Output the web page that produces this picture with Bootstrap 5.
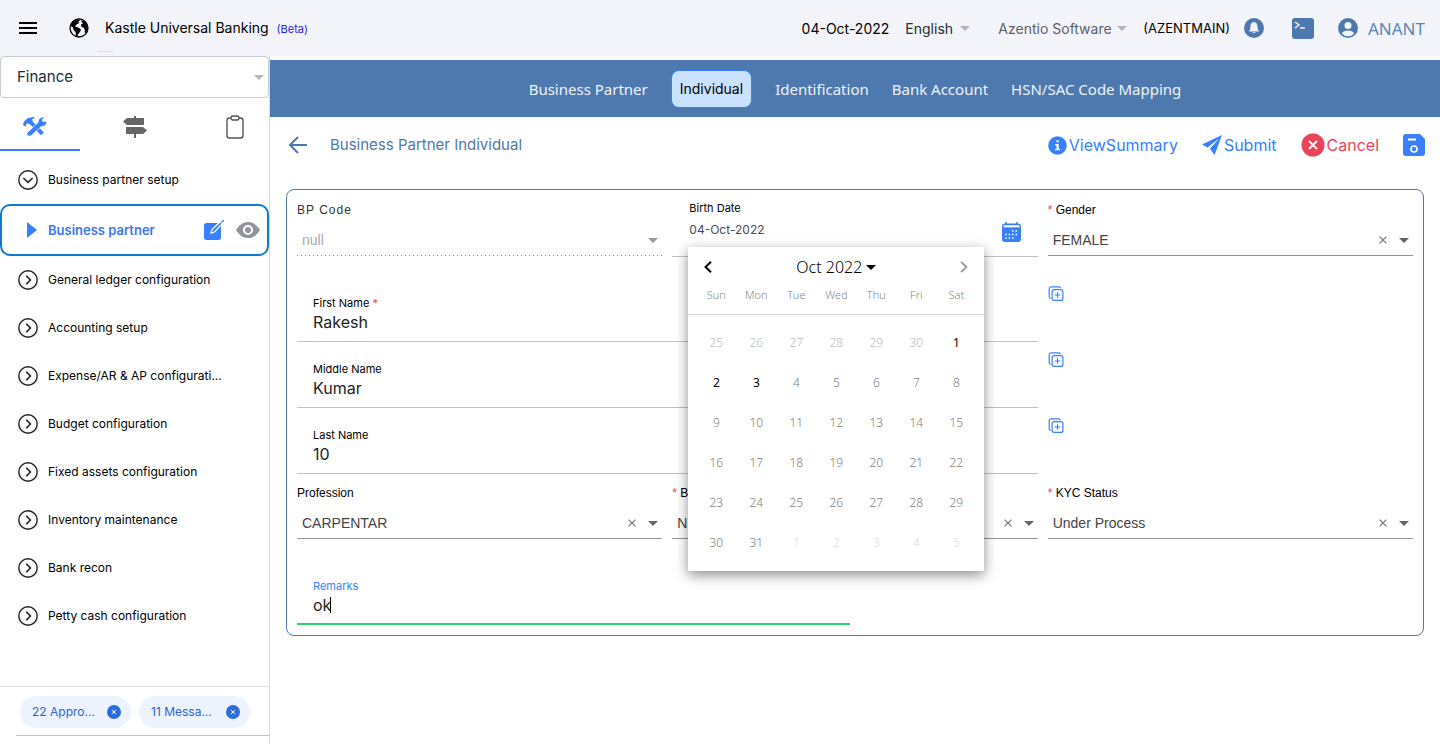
<!DOCTYPE html>
<html lang="en">
<head>
<meta charset="utf-8">
<meta name="viewport" content="width=device-width, initial-scale=1">
<title>Kastle Universal Banking</title>
<link href="https://cdn.jsdelivr.net/npm/bootstrap@5.3.0/dist/css/bootstrap.min.css" rel="stylesheet">
<style>
  :root { --steel: #4e79ae; --azure: #3880ff; --rule: #949494; }
  body { font-family: Inter, "Liberation Sans", sans-serif; font-size: 14px; color: #000; background: #fff; }
  a { text-decoration: none; color: inherit; }
  button { font-family: inherit; color: inherit; }
  svg { display: block; flex: none; }
  select { appearance: none; background: transparent; border: 0; padding: 0; outline: 0; color: inherit; font: inherit; }
  select:disabled { opacity: 1; }
  input { background: transparent; border: 0; padding: 0; outline: 0; color: inherit; }
  .plain { background: none; border: 0; padding: 0; }

  .topbar { height: 56px; background: #f3f4f9; padding: 0 15px 0 19px; }
  .dash { width: 16px; height: 1px; background: #dcdde2; left: 97px; top: 51px; }
  .globe { margin: 0 16px 0 32px; }
  .brand { line-height: 20px; }
  .beta { font-size: 11px; color: #2a1af0; }
  .code { font-size: 13px; line-height: 20px; }
  .bell { margin-left: 14px; }
  .user { font: 17px "Noto Sans", sans-serif; color: #5a84b8; gap: 10px; }
  .lang { width: 55px; color: #222b38; }
  .company { width: 119px; color: #5b6068; }

  .side { width: 270px; border-right: 1px solid #d9d9de; }
  .module { height: 42px; border: 1px solid #c9cbd6; border-radius: 4px; padding: 0 4px 0 16px; font-size: 15px; color: #222b38; }
  .tabs-row { height: 53px; margin-bottom: 5px; gap: 20px; }
  .tabs-row button { flex: 0 1 80px; border-bottom: 2px solid transparent; padding: 6px 0 0 23px; }
  .tabs-row button:not(:last-child) { flex-shrink: 0; }
  .tabs-row button.on { border-color: var(--azure); }
  .menu-row { height: 48px; padding-left: 18px; gap: 10px; font-size: 12px; line-height: 20px; }
  .menu-row.on { height: 52px; border: 2px solid #0e79ce; border-radius: 10px; font-size: 13px; font-weight: 600; color: #3c75f5; padding: 0 7px 0 24px; }
  .menu-row .view { margin-left: 2px; }
  .chips { border-top: 1px solid #e2e2e6; padding: 9px 0 8px 16px; }
  .chips-row { border-bottom: 1px solid #c4c4c8; padding: 0 4px 7px; gap: 8px; }
  .chip { height: 32px; width: 111px; border-radius: 16px; background: #edf3ff; color: #2f63d6; font-size: 12px; padding: 0 10px 0 12px; }

  .section-nav { height: 57px; margin-top: 4px; background: var(--steel); gap: 23px; font: 15px/20px "Noto Sans", sans-serif; color: #eef3fa; }
  .section-nav .on { height: 38px; padding: 0 8px; border: 1px solid var(--azure); border-radius: 8px; background: #c9e2ff; color: #000; font: 14px/20px Inter, sans-serif; }
  .page-head { height: 56px; margin: 0 15px 16px 18px; }
  .page-head h1 { font-size: 15px; font-weight: 400; line-height: 20px; color: var(--steel); margin: 0 0 0 23px; }
  .action { font-size: 16px; line-height: 24px; color: var(--azure); gap: 2px; }

  .panel { margin: 0 16px; border: 1px solid var(--steel); border-radius: 8px; padding: 10px; }
  .panel > .row { --bs-gutter-x: 10px; }
  .picks { margin-bottom: 20px; }
  .last-name { margin-bottom: 9px; }
  .pick { height: 56px; border-bottom: 1px solid var(--rule); font-family: "Liberation Sans", sans-serif; }
  .pick label { font-size: 12px; line-height: 20px; }
  .pick .line { height: 40px; padding: 0 4px 0 5px; font-size: 14px; color: #444; gap: 12px; }
  .pick.off { border-bottom: 0; background: repeating-linear-gradient(90deg, #888 0 1px, transparent 1px 4px) bottom / 100% 1px no-repeat; }
  .pick.off label { letter-spacing: 1px; color: #333; }
  .pick.off .line { color: #aaa; }
  .ast { color: #eb445a; }
  .entry { height: 66px; border-bottom: 1px solid #c2c2c2; padding: 19px 16px 0; }
  .entry label { font-size: 11px; line-height: 16px; }
  .entry input { font-size: 16px; line-height: 20px; height: 22px; color: #222; }
  .entry.live { border-bottom: 2px solid #2dd36f; caret-color: transparent; }
  .entry.live label { color: var(--azure); }
  .caret-bar { left: 17px; top: 3px; width: 1px; height: 16px; background: #000; }
  .add { padding-top: 9px; }
  .birth { height: 57px; margin-bottom: -1px; border-bottom: 1px solid #c2c2c2; padding-left: 17px; padding-right: 17px; }
  .birth label { font-size: 11px; line-height: 16px; }
  .birth input { font-size: 12px; height: 26px; color: #444b55; }
  .birth button { margin-top: 22px; }

  .cal { left: 21px; top: 47px; width: 296px; background: #fff; z-index: 5; padding-bottom: 8px; box-shadow: 0 4px 12px rgba(0,0,0,.45); font-family: "Noto Sans", sans-serif; }
  .cal-top { height: 40px; padding: 0 15px; font-size: 16px; }
  .cal-top button { font-weight: 300; }
  .cal table { width: 280px; margin: 0 8px; text-align: center; table-layout: fixed; font-weight: 300; }
  .cal th { font-size: 11px; font-weight: 300; color: #888; height: 27px; padding: 0 0 11px; line-height: 16px; }
  .cal td { font-size: 12px; height: 40px; padding: 0; color: #808080; }
  .cal td.was { color: #bbb; }
  .cal td.next { color: #ddd; }
  .cal td.ok { color: #000; font-weight: 400; }
  .cal-weeks { border-bottom: 1px solid #dcdcdc; margin-bottom: 8px; }
</style>
</head>
<body>
<svg class="d-none" xmlns="http://www.w3.org/2000/svg">
  <symbol id="caret" viewBox="0 0 10 5"><path d="M0 0h10L5 5z" fill="currentColor"/></symbol>
  <symbol id="ring-right" viewBox="0 0 20 20"><circle cx="10" cy="10" r="9.200" fill="none" stroke="#222" stroke-width="1.400"/><path d="M8.200 5.800l4.200 4.200-4.200 4.200" fill="none" stroke="#222" stroke-width="1.600"/></symbol>
  <symbol id="ring-down" viewBox="0 0 20 20"><circle cx="10" cy="10" r="9.200" fill="none" stroke="#222" stroke-width="1.400"/><path d="M5.400 8l4.600 4.400L14.600 8" fill="none" stroke="#222" stroke-width="1.600"/></symbol>
  <symbol id="cross" viewBox="0 0 8 8"><path d="M.6.6l6.800 6.800M7.400.6L.6 7.400" stroke="#777" stroke-width="1.300"/></symbol>
  <symbol id="chip-x" viewBox="0 0 14 14"><circle cx="7" cy="7" r="7" fill="#2d6cdf"/><path d="M4.900 4.900l4.200 4.200M9.100 4.900L4.900 9.100" stroke="#fff" stroke-width="1"/></symbol>
  <symbol id="copy-plus" viewBox="0 0 15 15"><rect x="3.600" y="3.600" width="10.800" height="10.800" rx="2" fill="none" stroke="#3880ff" stroke-width="1.200"/><path d="M12 2.200A2 2 0 0 0 10.400.8H2.600A2 2 0 0 0 .7 2.700v8a2 2 0 0 0 1.600 1.800M9 6.200v5.600M6.200 9h5.600" fill="none" stroke="#3880ff" stroke-width="1.200"/></symbol>
</svg>

<div class="d-flex flex-column min-vh-100">
<header class="topbar d-flex align-items-center position-relative">
  <span class="dash position-absolute"></span>
  <button class="plain" aria-label="Menu"><svg width="18" height="12" viewBox="0 0 18 12"><path d="M0 1h18M0 6h18M0 11h18" stroke="#000" stroke-width="2"/></svg></button>
  <svg class="globe" width="20" height="20" viewBox="0 0 20 20"><circle cx="10" cy="10" r="9" fill="#f3f4f9" stroke="#000" stroke-width="1.300"/><path d="M3 4.500C5 2 7 1.200 9.500 1l1.500 1.500-1.500 1 .5 1.500-2.500 1.500L6 8.500l2 .5 3 1.500 1 1.500-1.500 2.500L9 16.500l-.5 2-1.500-.5-.5-4-2-2-.5-2.500L1.500 8z"/><path d="M12.500 2l4 2 2.500 5-.5 4-2 2.500-1-1.500.5-2-1.500-2.500-2-.5-.5-2.500L14 5.500l-1.500-1.500z"/></svg>
  <span class="brand">Kastle Universal Banking <a href="#" class="beta ms-1">(Beta)</a></span>
  <div class="ms-auto d-flex align-items-center">
    <span class="me-3">04-Oct-2022</span>
    <label class="d-flex align-items-center me-4 text-secondary"><select class="lang" aria-label="Language"><option>English</option></select><svg width="10" height="5" opacity=".5"><use href="#caret"/></svg></label>
    <label class="d-flex align-items-center me-3 ms-1 text-secondary"><select class="company" aria-label="Company"><option>Azentio Software</option></select><svg width="10" height="5" opacity=".5"><use href="#caret"/></svg></label>
    <span class="code">(AZENTMAIN)</span>
    <button class="plain bell" aria-label="Alerts"><svg width="20" height="20" viewBox="0 0 20 20"><circle cx="10" cy="10" r="10" fill="#4e79ae"/><path d="M10 4c-3 .5-3.600 3-3.600 5.500 0 2-.8 2.600-1.400 3.900h10c-.6-1.300-1.400-1.900-1.400-3.900C13.600 7 13 4.500 10 4zM8.300 14.200a1.800 1.500 0 0 0 3.400 0z" fill="#f3f4f9"/></svg></button>
    <button class="plain mx-4 ps-1" aria-label="Console"><svg width="22" height="21" viewBox="0 0 22 21"><rect width="22" height="21" rx="3" fill="#4e79ae"/><path d="M3 4l4 3-4 3M8 10h5" stroke="#f3f4f9" stroke-width="1.500" fill="none"/></svg></button>
    <a href="#" class="user d-flex align-items-center"><svg width="20" height="20" viewBox="0 0 20 20"><circle cx="10" cy="10" r="10" fill="#4e79ae"/><circle cx="10" cy="7.500" r="3.500" fill="#f3f4f9"/><path d="M3.800 15.500c1.500-4 10.900-4 12.400 0a8.300 8.300 0 0 1-12.400 0z" fill="#f3f4f9"/></svg>ANANT</a>
  </div>
</header>

<div class="d-flex flex-grow-1">
<aside class="side d-flex flex-column flex-shrink-0">
  <label class="module d-flex align-items-center"><select class="flex-fill" aria-label="Module"><option>Finance</option></select><svg width="10" height="5" color="#b5b6bb"><use href="#caret"/></svg></label>
  <div class="tabs-row d-flex">
    <button class="plain on" aria-label="Setup"><svg width="24" height="20" viewBox="0 0 24 22" preserveAspectRatio="none" fill="#3880ff"><path d="M0 9l1-4 4-4 6-1 1 1-3 1.500 1 3L21 17l-3 3L7.500 8.500 5 7 3 8v2.500z"/><path d="M15 6l1-4 3-2 3 .5L19 3l1 2 3-.5.800 2L22 9.500l-4 1.200L8 20.500c-3 1.500-5-1-3.500-3.500z" stroke="#fff" stroke-width=".7"/></svg></button>
    <button class="plain" aria-label="Directions"><svg width="24" height="22" viewBox="0 0 24 22" fill="#666"><path d="M11 0h2v2h8v7H4L0 5.500 4 2h7zM3 11h17l4 3.500-4 3.500h-7v4h-2v-4H3z"/></svg></button>
    <button class="plain" aria-label="Clipboard"><svg width="24" height="24" viewBox="0 0 24 24" fill="none" stroke="#555" stroke-width="1.400"><rect x="4" y="3" width="16" height="20" rx="2.500"/><path d="M8 3c0-2 1-2 4-2s4 0 4 2-1 2-4 2-4 0-4-2z" fill="#fff"/></svg></button>
  </div>
  <nav class="d-flex flex-column">
    <a href="#" class="menu-row d-flex align-items-center"><svg width="20" height="20"><use href="#ring-down"/></svg>Business partner setup</a>
    <div class="menu-row on d-flex align-items-center"><svg width="12" height="16" viewBox="0 0 12 16"><path d="M1 0l10 8-10 8z" fill="#3880ff"/></svg><a href="#">Business partner</a>
      <button class="plain ms-auto" aria-label="Edit"><svg width="20" height="20" viewBox="0 0 20 20"><rect y="3" width="17" height="17" rx="2.500" fill="#3880ff"/><path d="M7 13l1-3.500L16.500 1.500l2 2L10.500 12z" fill="#3880ff" stroke="#fff" stroke-width="1.300"/><path d="M17.500 2.500L20 0" stroke="#3880ff" stroke-width="1.500"/></svg></button>
      <button class="plain view" aria-label="View"><svg width="24" height="16" viewBox="0 0 24 16"><path d="M0 8C3 3 7 0 12 0s9 3 12 8c-3 5-7 8-12 8S3 13 0 8z" fill="#92949c"/><circle cx="12" cy="8" r="4" fill="none" stroke="#fff" stroke-width="2"/></svg></button></div>
    <a href="#" class="menu-row d-flex align-items-center"><svg width="20" height="20"><use href="#ring-right"/></svg>General ledger configuration</a>
    <a href="#" class="menu-row d-flex align-items-center"><svg width="20" height="20"><use href="#ring-right"/></svg>Accounting setup</a>
    <a href="#" class="menu-row d-flex align-items-center"><svg width="20" height="20"><use href="#ring-right"/></svg>Expense/AR &amp; AP configurati...</a>
    <a href="#" class="menu-row d-flex align-items-center"><svg width="20" height="20"><use href="#ring-right"/></svg>Budget configuration</a>
    <a href="#" class="menu-row d-flex align-items-center"><svg width="20" height="20"><use href="#ring-right"/></svg>Fixed assets configuration</a>
    <a href="#" class="menu-row d-flex align-items-center"><svg width="20" height="20"><use href="#ring-right"/></svg>Inventory maintenance</a>
    <a href="#" class="menu-row d-flex align-items-center"><svg width="20" height="20"><use href="#ring-right"/></svg>Bank recon</a>
    <a href="#" class="menu-row d-flex align-items-center"><svg width="20" height="20"><use href="#ring-right"/></svg>Petty cash configuration</a>
  </nav>
  <div class="chips mt-auto"><div class="chips-row d-flex">
    <button class="plain chip d-flex align-items-center justify-content-between">22 Appro...<svg width="14" height="14"><use href="#chip-x"/></svg></button>
    <button class="plain chip d-flex align-items-center justify-content-between">11 Messa...<svg width="14" height="14"><use href="#chip-x"/></svg></button>
  </div></div>
</aside>

<main class="flex-fill">
  <nav class="section-nav d-flex align-items-center justify-content-center">
    <a href="#">Business Partner</a>
    <a href="#" class="on d-flex align-items-center">Individual</a>
    <a href="#">Identification</a>
    <a href="#">Bank Account</a>
    <a href="#">HSN/SAC Code Mapping</a>
  </nav>
  <div class="page-head d-flex align-items-center">
    <button class="plain" aria-label="Back"><svg width="19" height="18" viewBox="0 0 19 18"><path d="M10 1L2 9l8 8M2 9h17" fill="none" stroke="#4e79ae" stroke-width="2"/></svg></button>
    <h1>Business Partner Individual</h1>
    <div class="ms-auto d-flex align-items-center">
      <button class="plain action d-flex align-items-center me-4"><svg width="19" height="19" viewBox="0 0 19 19"><circle cx="9.500" cy="9.500" r="9.300" fill="#3880ff"/><path d="M8.500 4.200h2.200v2H8.500zM7.200 8h3.500v5H12v1.300H7V13h1.500V9.400H7.200z" fill="#fff"/></svg>ViewSummary</button>
      <button class="plain action d-flex align-items-center me-4"><svg width="20" height="20" viewBox="0 0 20 20"><path d="M20 0L0 9.500l5.500 3L17 3.500 8 13.800l4.500 6.200z" fill="#3880ff"/></svg>Submit</button>
      <button class="plain action ast d-flex align-items-center me-4"><svg width="24" height="24" viewBox="0 0 24 24"><circle cx="12" cy="12" r="11.500" fill="#eb445a"/><path d="M8 8l8 8M16 8l-8 8" stroke="#fff" stroke-width="1.800"/></svg>Cancel</button>
      <button class="plain" aria-label="Save"><svg width="22" height="22" viewBox="0 0 22 22"><path d="M3 0h14l5 5v14a3 3 0 0 1-3 3H3a3 3 0 0 1-3-3V3a3 3 0 0 1 3-3z" fill="#3880ff"/><path d="M5 5.500h8" stroke="#fff" stroke-width="2"/><circle cx="11" cy="15" r="3" fill="none" stroke="#fff" stroke-width="1.600"/></svg></button>
    </div>
  </div>

  <form class="panel">
    <div class="row picks">
      <div class="col-4"><div class="pick off"><label for="bp" class="d-block">BP Code</label><div class="line d-flex align-items-center"><select id="bp" class="flex-fill" disabled><option>null</option></select><svg width="10" height="5" color="#999"><use href="#caret"/></svg></div></div></div>
      <div class="col-4 position-relative">
        <div class="birth d-flex justify-content-between"><div><label for="dob" class="d-block">Birth Date</label><input id="dob" class="d-block" value="04-Oct-2022"></div>
          <button type="button" class="plain align-self-start" aria-label="Pick a date"><svg width="19" height="20" viewBox="0 0 19 20"><path d="M3 1.500h13a3 3 0 0 1 3 3V17a3 3 0 0 1-3 3H3a3 3 0 0 1-3-3V4.500a3 3 0 0 1 3-3z" fill="#3880ff"/><path d="M1.500 3.300h16v2h-16z" fill="#fff"/><path d="M4 0v3M15 0v3" stroke="#3880ff" stroke-width="1.500"/><path d="M10 9h1.500M13.500 9H15M3.200 12.500h1.500M6.600 12.500h1.500M10 12.500h1.500M13.500 12.500H15M3.200 16h1.500M6.600 16h1.500M10 16h1.500" stroke="#fff" stroke-width="1.500"/></svg></button></div>
        <div class="cal position-absolute">
          <div class="cal-top d-flex align-items-center justify-content-between">
            <button type="button" class="plain" aria-label="Previous month"><svg width="10" height="12" viewBox="0 0 10 12"><path d="M8 .8L2.500 6 8 11.200" fill="none" stroke="#000" stroke-width="2"/></svg></button>
            <button type="button" class="plain d-flex align-items-center gap-1">Oct 2022<svg width="10" height="5"><use href="#caret"/></svg></button>
            <button type="button" class="plain" aria-label="Next month"><svg width="10" height="12" viewBox="0 0 10 12"><path d="M2 .8L7.500 6 2 11.200" fill="none" stroke="#999" stroke-width="1.800"/></svg></button>
          </div>
          <div class="cal-weeks"><table><tr><th>Sun</th><th>Mon</th><th>Tue</th><th>Wed</th><th>Thu</th><th>Fri</th><th>Sat</th></tr></table></div>
          <table>
            <tr><td class="was">25</td><td class="was">26</td><td class="was">27</td><td class="was">28</td><td class="was">29</td><td class="was">30</td><td class="ok">1</td></tr>
            <tr><td class="ok">2</td><td class="ok">3</td><td>4</td><td>5</td><td>6</td><td>7</td><td>8</td></tr>
            <tr><td>9</td><td>10</td><td>11</td><td>12</td><td>13</td><td>14</td><td>15</td></tr>
            <tr><td>16</td><td>17</td><td>18</td><td>19</td><td>20</td><td>21</td><td>22</td></tr>
            <tr><td>23</td><td>24</td><td>25</td><td>26</td><td>27</td><td>28</td><td>29</td></tr>
            <tr><td>30</td><td>31</td><td class="next">1</td><td class="next">2</td><td class="next">3</td><td class="next">4</td><td class="next">5</td></tr>
          </table>
        </div>
      </div>
      <div class="col-4"><div class="pick"><label for="gender" class="d-block"><span class="ast">*</span> Gender</label><div class="line d-flex align-items-center"><select id="gender" class="flex-fill"><option>FEMALE</option></select><button type="button" class="plain" aria-label="Clear"><svg width="8" height="8"><use href="#cross"/></svg></button><svg width="10" height="5" color="#666"><use href="#caret"/></svg></div></div></div>
    </div>
    <div class="row">
      <div class="col-8"><div class="entry"><label for="first" class="d-block">First Name <span class="ast">*</span></label><input id="first" class="d-block w-100" value="Rakesh"></div></div>
      <div class="col-4 add"><button type="button" class="plain" aria-label="Add first name"><svg width="16" height="15"><use href="#copy-plus"/></svg></button></div>
    </div>
    <div class="row">
      <div class="col-8"><div class="entry"><label for="middle" class="d-block">Middle Name</label><input id="middle" class="d-block w-100" value="Kumar"></div></div>
      <div class="col-4 add"><button type="button" class="plain" aria-label="Add middle name"><svg width="16" height="15"><use href="#copy-plus"/></svg></button></div>
    </div>
    <div class="row last-name">
      <div class="col-8"><div class="entry"><label for="last" class="d-block">Last Name</label><input id="last" class="d-block w-100" value="10"></div></div>
      <div class="col-4 add"><button type="button" class="plain" aria-label="Add last name"><svg width="16" height="15"><use href="#copy-plus"/></svg></button></div>
    </div>
    <div class="row picks">
      <div class="col-4"><div class="pick"><label for="job" class="d-block">Profession</label><div class="line d-flex align-items-center"><select id="job" class="flex-fill"><option>CARPENTAR</option></select><button type="button" class="plain" aria-label="Clear"><svg width="8" height="8"><use href="#cross"/></svg></button><svg width="10" height="5" color="#666"><use href="#caret"/></svg></div></div></div>
      <div class="col-4"><div class="pick"><label for="b" class="d-block"><span class="ast">*</span> B</label><div class="line d-flex align-items-center"><select id="b" class="flex-fill"><option>N</option></select><button type="button" class="plain" aria-label="Clear"><svg width="8" height="8"><use href="#cross"/></svg></button><svg width="10" height="5" color="#666"><use href="#caret"/></svg></div></div></div>
      <div class="col-4"><div class="pick"><label for="kyc" class="d-block"><span class="ast">*</span> KYC Status</label><div class="line d-flex align-items-center"><select id="kyc" class="flex-fill"><option>Under Process</option></select><button type="button" class="plain" aria-label="Clear"><svg width="8" height="8"><use href="#cross"/></svg></button><svg width="10" height="5" color="#666"><use href="#caret"/></svg></div></div></div>
    </div>
    <div class="row">
      <div class="col-6"><div class="entry live"><label for="remarks" class="d-block">Remarks</label><div class="position-relative"><input id="remarks" class="d-block w-100" value="ok" autofocus><span class="caret-bar position-absolute"></span></div></div></div>
    </div>
  </form>
</main>
</div>
</div>
<script src="https://cdn.jsdelivr.net/npm/bootstrap@5.3.0/dist/js/bootstrap.bundle.min.js"></script>
</body>
</html>
